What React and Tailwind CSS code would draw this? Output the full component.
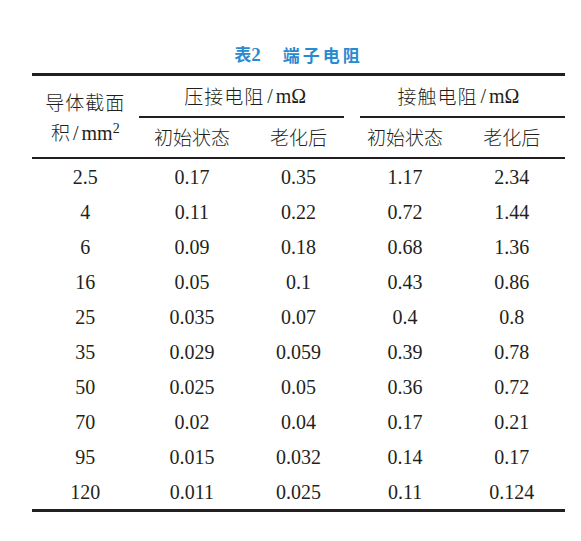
import React from "react";

const rows = [
  ["2.5", "0.17", "0.35", "1.17", "2.34"],
  ["4", "0.11", "0.22", "0.72", "1.44"],
  ["6", "0.09", "0.18", "0.68", "1.36"],
  ["16", "0.05", "0.1", "0.43", "0.86"],
  ["25", "0.035", "0.07", "0.4", "0.8"],
  ["35", "0.029", "0.059", "0.39", "0.78"],
  ["50", "0.025", "0.05", "0.36", "0.72"],
  ["70", "0.02", "0.04", "0.17", "0.21"],
  ["95", "0.015", "0.032", "0.14", "0.17"],
  ["120", "0.011", "0.025", "0.11", "0.124"],
];

function GroupHead({ title, side }) {
  return (
    <div className="flex-1 flex flex-col">
      <div className="h-[40px] flex items-center justify-center text-[19px] tracking-[1px]">
        {title}
        <span className="font-['Liberation_Serif',serif] text-[20px] tracking-normal">
          <span className="mx-[3px]">/</span>mΩ
        </span>
      </div>
      <div className={side === "left" ? "h-[2px] bg-[#231f20] mr-[8px]" : "h-[2px] bg-[#231f20] ml-[8px]"} />
      <div className="h-[39px] flex text-[19px]">
        <div className="flex-1 flex items-center justify-center">初始状态</div>
        <div className="flex-1 flex items-center justify-center">老化后</div>
      </div>
    </div>
  );
}

export default function App() {
  return (
    <div className="w-[581px] h-[541px] bg-white text-[#231f20] font-['Noto_Sans_CJK_SC',sans-serif] font-light">
      <div className="pl-[32px] pt-[40px]">
        <div className="w-[533px]">
          {/* caption */}
          <div className="h-[30px] flex items-center justify-center text-[17px] font-bold text-[#2a8ad0]">
            <span>
              表<span className="font-['Liberation_Serif',serif] text-[19px]">2</span>
            </span>
            <span className="ml-[22px] tracking-[3px]">端子电阻</span>
          </div>

          <div className="mt-[3px] h-[3px] bg-[#231f20]" />

          {/* header */}
          <div className="flex">
            <div className="w-[106.6px] flex flex-col items-center justify-center pt-[4px] text-[19px]">
              <div className="leading-[30px] tracking-[1px]">导体截面</div>
              <div className="leading-[30px]">
                积
                <span className="font-['Liberation_Serif',serif] text-[20px]">
                  <span className="mx-[3px]">/</span>mm
                  <span className="text-[14px] relative top-[-7px]">2</span>
                </span>
              </div>
            </div>
            <GroupHead title="压接电阻" side="left" />
            <GroupHead title="接触电阻" side="right" />
          </div>

          <div className="h-[2px] bg-[#231f20]" />

          {/* body */}
          <div className="font-['Liberation_Serif',serif] font-normal text-[20px]">
            {rows.map((r) => (
              <div key={r[0]} className="grid grid-cols-5 h-[35px] items-center text-center">
                {r.map((v, i) => (
                  <div key={i}>{v}</div>
                ))}
              </div>
            ))}
          </div>

          <div className="h-[3px] bg-[#231f20]" />
        </div>
      </div>
    </div>
  );
}
